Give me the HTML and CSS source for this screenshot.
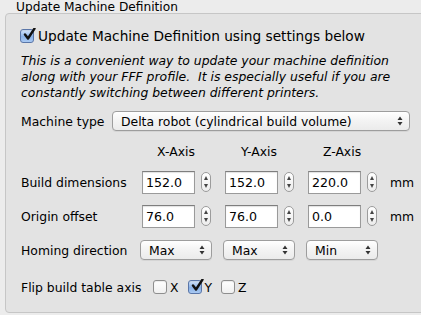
FILE: index.html
```html
<!DOCTYPE html>
<html>
<head>
<meta charset="utf-8">
<link rel="stylesheet" href="styles.css">
</head>
<body>
<div class="group">
  <div class="legend">Update Machine Definition</div>
  <div class="box">
    <div class="main-check">
      <span class="cb checked"><svg viewBox="0 0 14 14"><path d="M3 6.5 L6 10.5 L12.5 0.5" fill="none" stroke="#111" stroke-width="2.4" stroke-linecap="round" stroke-linejoin="round"/></svg></span>
      <span>Update Machine Definition using settings below</span>
    </div>
    <p class="desc">This is a convenient way to update your machine definition along with your FFF profile.&nbsp; It is especially useful if you are constantly switching between different printers.</p>
    <div class="type-row">
      <span class="label">Machine type</span>
      <div class="popup wide"><span>Delta robot (cylindrical build volume)</span><span class="arrows"><svg viewBox="0 0 6 10"><path d="M0.5 4 L3 0.5 L5.5 4 Z M0.5 6 L3 9.5 L5.5 6 Z" fill="#333"/></svg></span></div>
    </div>
    <div class="axes">
      <span></span>
      <span class="head">X-Axis</span>
      <span class="head">Y-Axis</span>
      <span class="head">Z-Axis</span>
      <span></span>

      <span class="label">Build dimensions</span>
      <div class="field"><span class="input">152.0</span><span class="stepper"><i class="up"></i><i class="down"></i></span></div>
      <div class="field"><span class="input">152.0</span><span class="stepper"><i class="up"></i><i class="down"></i></span></div>
      <div class="field"><span class="input">220.0</span><span class="stepper"><i class="up"></i><i class="down"></i></span></div>
      <span class="unit">mm</span>

      <span class="label">Origin offset</span>
      <div class="field"><span class="input">76.0</span><span class="stepper"><i class="up"></i><i class="down"></i></span></div>
      <div class="field"><span class="input">76.0</span><span class="stepper"><i class="up"></i><i class="down"></i></span></div>
      <div class="field"><span class="input">0.0</span><span class="stepper"><i class="up"></i><i class="down"></i></span></div>
      <span class="unit">mm</span>

      <span class="label">Homing direction</span>
      <div class="popup small"><span>Max</span><span class="arrows"><svg viewBox="0 0 6 10"><path d="M0.5 4 L3 0.5 L5.5 4 Z M0.5 6 L3 9.5 L5.5 6 Z" fill="#333"/></svg></span></div>
      <div class="popup small"><span>Max</span><span class="arrows"><svg viewBox="0 0 6 10"><path d="M0.5 4 L3 0.5 L5.5 4 Z M0.5 6 L3 9.5 L5.5 6 Z" fill="#333"/></svg></span></div>
      <div class="popup small"><span>Min</span><span class="arrows"><svg viewBox="0 0 6 10"><path d="M0.5 4 L3 0.5 L5.5 4 Z M0.5 6 L3 9.5 L5.5 6 Z" fill="#333"/></svg></span></div>
      <span></span>
    </div>
    <div class="flip-row">
      <span class="label">Flip build table axis</span>
      <span class="cb"></span><span class="axl">X</span>
      <span class="cb checked"><svg viewBox="0 0 14 14"><path d="M3 6.5 L6 10.5 L12.5 0.5" fill="none" stroke="#111" stroke-width="2.4" stroke-linecap="round" stroke-linejoin="round"/></svg></span><span class="axl">Y</span>
      <span class="cb"></span><span class="axl">Z</span>
    </div>
  </div>
</div>
</body>
</html>
```

FILE: styles.css
```css
html, body {
  margin: 0;
  padding: 0;
}
body {
  background: #ececec;
  font-family: "DejaVu Sans", "Liberation Sans", sans-serif;
  font-size: 12.4px;
  color: #000;
  width: 421px;
  height: 315px;
  overflow: hidden;
}
.group {
  padding: 0 0 0 5px;
}
.legend {
  height: 13px;
  line-height: 14px;
  padding-left: 11px;
  font-size: 12.2px;
}
.box {
  width: 440px;
  height: 300px;
  box-sizing: border-box;
  border: 1px solid #c6c6c6;
  border-radius: 4px;
  background: #e3e3e3;
  padding: 14px 0 0 15px;
}
.main-check {
  display: flex;
  align-items: center;
  gap: 4px;
  font-size: 13.7px;
  height: 15px;
}
.cb {
  display: inline-block;
  width: 12px;
  height: 12px;
  border: 1px solid #8e8e8e;
  border-radius: 3px;
  background: linear-gradient(#ffffff, #f0f0f0);
  position: relative;
  flex: none;
  box-shadow: inset 0 1px 1px rgba(0,0,0,0.08);
}
.main-check .cb {
  margin-left: -1px;
}
.cb.checked {
  border-color: #5a76a8;
  background: linear-gradient(#d6e6fb, #8ab2e8 55%, #a9c9f2);
}
.cb svg {
  position: absolute;
  left: 1px;
  top: -2px;
  width: 14px;
  height: 14px;
}
.desc {
  margin: 10px 0 0 0;
  font-style: italic;
  font-size: 12.4px;
  line-height: 16px;
  width: 385px;
}
.type-row {
  display: flex;
  align-items: center;
  margin-top: 10px;
  height: 20px;
}
.type-row .label {
  width: 91px;
}
.popup {
  height: 20px;
  box-sizing: border-box;
  border: 1px solid #9d9d9d;
  border-radius: 4px;
  background: linear-gradient(#ffffff, #f3f3f3 50%, #ebebeb);
  display: flex;
  align-items: center;
  justify-content: space-between;
  padding: 0 6px 0 8px;
  font-size: 12.4px;
  box-shadow: 0 1px 0 rgba(0,0,0,0.06);
}
.popup.wide {
  width: 298px;
}
.popup.small {
  width: 72px;
}
.arrows {
  display: flex;
  align-items: center;
}
.arrows svg {
  width: 6px;
  height: 10px;
}
.axes {
  display: grid;
  grid-template-columns: 119px 83px 83px 83px auto;
  grid-template-rows: 26px 34px 34px 34px;
  align-items: center;
  margin-top: 8px;
}
.head {
  text-align: center;
  width: 68px;
  margin-left: 2px;
  align-self: start;
  margin-top: 6px;
  line-height: 14px;
}
.field {
  display: flex;
  align-items: center;
  gap: 6px;
  margin-left: 2px;
}
.input {
  width: 53px;
  height: 23px;
  box-sizing: border-box;
  border: 1px solid #9a9a9a;
  border-top-color: #7e7e7e;
  background: #fff;
  font-size: 12.6px;
  line-height: 21px;
  padding-left: 3px;
  box-shadow: inset 0 1px 1px rgba(0,0,0,0.12);
}
.stepper {
  width: 10px;
  height: 20px;
  box-sizing: border-box;
  border: 1px solid #9c9c9c;
  border-radius: 5px;
  background: linear-gradient(#ffffff, #ececec);
  position: relative;
}
.stepper i {
  position: absolute;
  left: 2px;
  width: 0;
  height: 0;
  border-left: 2px solid transparent;
  border-right: 2px solid transparent;
}
.stepper .up {
  top: 3px;
  border-bottom: 4px solid #444;
}
.stepper .down {
  bottom: 3px;
  border-top: 4px solid #444;
}
.unit {
  margin-left: 1px;
}
.flip-row {
  display: flex;
  align-items: center;
  margin-top: 10px;
  height: 20px;
}
.flip-row .label {
  width: 132px;
}
.axl {
  margin-left: 3px;
  margin-right: 9px;
}
```
